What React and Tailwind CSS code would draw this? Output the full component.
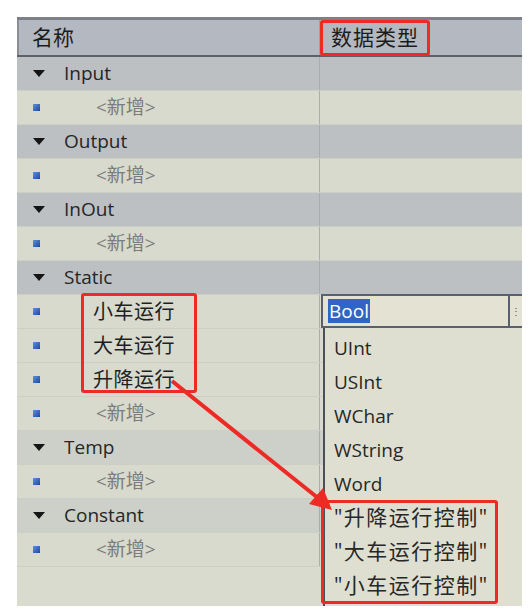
import React from "react";

const rows = [
    { type: "section", label: "Input" },
    { type: "add" },
    { type: "section", label: "Output" },
    { type: "add" },
    { type: "section", label: "InOut" },
    { type: "add" },
    { type: "section", label: "Static" },
    { type: "item", label: "小车运行" },
    { type: "item", label: "大车运行" },
    { type: "item", label: "升降运行" },
    { type: "add" },
    { type: "section", label: "Temp", light: true },
    { type: "add" },
    { type: "section", label: "Constant", light: true },
    { type: "add" },
];

const options = ["UInt", "USInt", "WChar", "WString", "Word", "\"升降运行控制\"", "\"大车运行控制\"", "\"小车运行控制\""];

const Triangle = () => (
    <svg width="12" height="8" viewBox="0 0 12 8">
        <polygon points="0,0 12,0 6,7" fill="#151515" />
    </svg>
);

const Square = () => (
    <div className="w-[7px] h-[7px] bg-gradient-to-br from-[#5f90de] to-[#1c4a9c]" />
);

const Row = ({ row }) => {
    const bg =
        row.type === "section"
            ? row.light
                ? "bg-[#cdd0c9]"
                : "bg-[#bcc0c2]"
            : "bg-[#d7dacd]";
    return (
        <div className={`flex h-[34px] ${bg} border-b border-[#cdcfc6]`}>
            <div className="w-[303px] flex items-center pl-[16px] border-r border-[#a9adad]">
                <div className="w-[31px] flex items-center">
                    {row.type === "section" ? <Triangle /> : <Square />}
                </div>
                {row.type === "section" && (
                    <span className="text-[19px] text-[#262626]">{row.label}</span>
                )}
                {row.type === "add" && (
                    <span className="pl-[32px] text-[19px] text-[#7c7c7c]">&lt;新增&gt;</span>
                )}
                {row.type === "item" && (
                    <span className="pl-[29px] text-[20px] text-[#1f1f1f] tracking-[0.5px]">{row.label}</span>
                )}
            </div>
            <div className="flex-1" />
        </div>
    );
};

export default function App() {
    return (
        <div className="w-[531px] h-[613px] bg-white relative overflow-hidden font-['Open_Sans','Noto_Sans_CJK_SC',sans-serif]">
            <div className="absolute left-[17px] top-[17px] w-[505px] h-[589px] bg-[#d9dbcf] overflow-hidden">
                {/* header */}
                <div className="flex h-[40px] bg-[#b4b9c1] border-t-[3px] border-b-[2px] border-t-[#7d8088] border-b-[#5c6068]">
                    <div className="w-[303px] flex items-center pl-[13px] border-l-2 border-[#8a8e95] border-r border-r-[#9ea2a8]">
                        <span className="text-[21px] text-[#1c1c1c]">名称</span>
                    </div>
                    <div className="flex-1 flex items-center">
                        <span className="h-[36px] flex items-center px-[8px] border-[3px] border-[#ee2a24] rounded-[3px] text-[21px] text-[#1c1c1c] tracking-[1px]">
                            数据类型
                        </span>
                    </div>
                </div>

                {rows.map((row, i) => (
                    <Row key={i} row={row} />
                ))}

                {/* data type dropdown */}
                <div className="absolute left-[304px] top-[277px] w-[215px] h-[34px] flex items-center bg-[#e4e3d3] border-2 border-[#5a6070]">
                    <span className="ml-[5px] px-[1px] bg-[#2f66c4] text-white text-[19px] leading-[24px]">Bool</span>
                    <div className="ml-auto mr-[12px] h-full w-[14px] border-l-2 border-[#5a6070] flex items-center justify-center">
                        <span className="text-[10px] text-[#555]">⋮</span>
                    </div>
                </div>
                <div className="absolute left-[306px] top-[311px] w-[210px] bottom-0 bg-[#dfdfd1] border-l-2 border-[#4c4f56] pt-[3px]">
                    {options.map((o, i) => (
                        <div
                            key={o}
                            className={`h-[34px] flex items-center pl-[9px] text-[#272727] ${i > 4 ? "text-[21px] tracking-[1.5px]" : "text-[19px]"}`}
                        >
                            {o}
                        </div>
                    ))}
                </div>
            </div>

            {/* annotations */}
            <div className="absolute left-[81px] top-[293px] w-[116px] h-[100px] border-[3px] border-[#ee2a24] rounded-[3px]" />
            <div className="absolute left-[321px] top-[500px] w-[177px] h-[104px] border-[3px] border-[#ee2a24] rounded-[3px]" />
            <svg className="absolute left-0 top-0" width="531" height="613">
                <line x1="172" y1="381" x2="318" y2="498" stroke="#ee2a24" strokeWidth="4" />
                <polygon points="332,510 309,504 323,488" fill="#ee2a24" />
            </svg>
        </div>
    );
}
